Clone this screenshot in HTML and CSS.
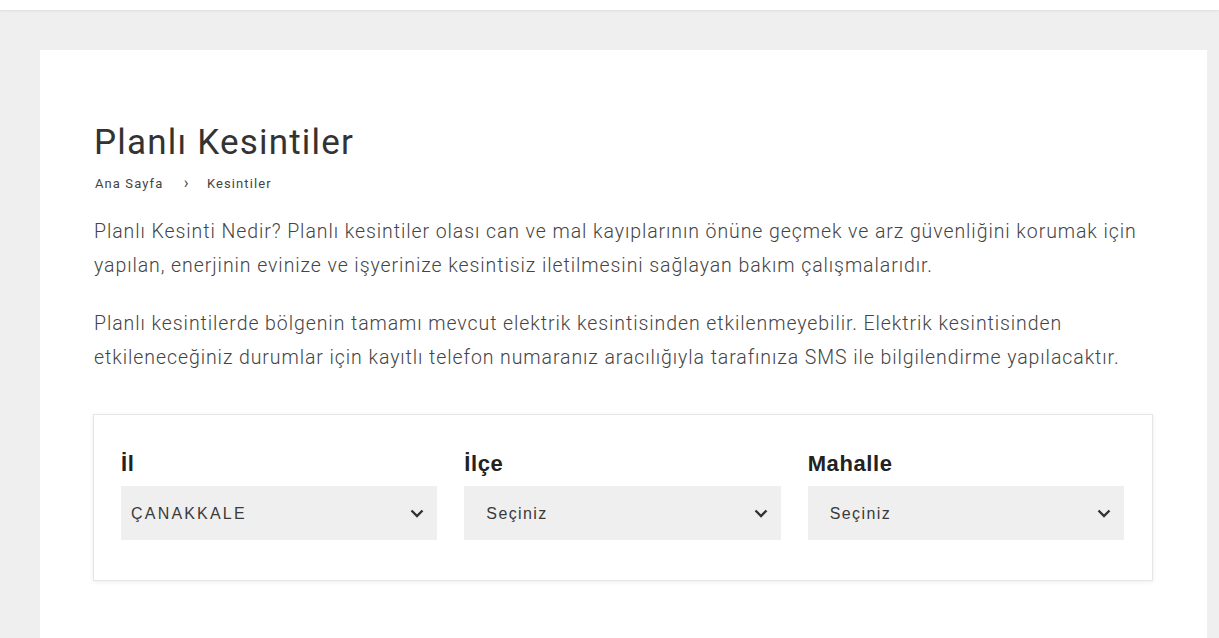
FILE: index.html
```html
<!DOCTYPE html>
<html lang="tr">
<head>
  <meta charset="UTF-8" />
  <title>Planlı Kesintiler</title>
  <link rel="stylesheet" href="styles.css">
</head>
<body>
  <div class="topbar"></div>

  <div class="page">
    <div class="content">
      <h1>Planlı Kesintiler</h1>
      <div class="breadcrumb">
        <a href="#">Ana Sayfa</a>
        <span class="sep">&rsaquo;</span>
        <span>Kesintiler</span>
      </div>

      <p>Planlı Kesinti Nedir? Planlı kesintiler olası can ve mal kayıplarının önüne geçmek ve arz güvenliğini korumak için yapılan, enerjinin evinize ve işyerinize kesintisiz iletilmesini sağlayan bakım çalışmalarıdır.</p>
      <p>Planlı kesintilerde bölgenin tamamı mevcut elektrik kesintisinden etkilenmeyebilir. Elektrik kesintisinden etkileneceğiniz durumlar için kayıtlı telefon numaranız aracılığıyla tarafınıza SMS ile bilgilendirme yapılacaktır.</p>

      <!-- Filter box -->
      <div class="filter">
        <div class="field">
          <label for="il">İl</label>
          <div class="select-wrap">
            <select id="il" class="selected">
              <option>ÇANAKKALE</option>
            </select>
            <svg class="chevron" viewBox="0 0 14 9"><path d="M1.5 1.5 L7 7 L12.5 1.5" /></svg>
          </div>
        </div>
        <div class="field">
          <label for="ilce">İlçe</label>
          <div class="select-wrap">
            <select id="ilce">
              <option>Seçiniz</option>
            </select>
            <svg class="chevron" viewBox="0 0 14 9"><path d="M1.5 1.5 L7 7 L12.5 1.5" /></svg>
          </div>
        </div>
        <div class="field">
          <label for="mahalle">Mahalle</label>
          <div class="select-wrap">
            <select id="mahalle">
              <option>Seçiniz</option>
            </select>
            <svg class="chevron" viewBox="0 0 14 9"><path d="M1.5 1.5 L7 7 L12.5 1.5" /></svg>
          </div>
        </div>
      </div>
    </div>
  </div>
</body>
</html>
```

FILE: styles.css
```css
body {
  margin: 0;
  font-family: Roboto, "Liberation Sans", sans-serif;
  background: #efefef;
  color: #333;
}

.topbar {
  height: 10px;
  background: #fff;
  box-shadow: 0 1px 3px rgba(0,0,0,0.08);
}

.page {
  padding: 40px 12px 0 40px;
}

.content {
  background: #fff;
  padding: 74px 54px 60px 53px;
  min-height: 520px;
}

h1 {
  margin: 0 0 0 1px;
  font-size: 35px;
  font-weight: 400;
  letter-spacing: 1.2px;
  color: #333;
  line-height: 38px;
}

.breadcrumb {
  margin: 11px 0 0 2px;
  font-size: 13px;
  letter-spacing: 1.1px;
  color: #444;
}

.breadcrumb a {
  color: #444;
  text-decoration: none;
}

.breadcrumb .sep {
  margin: 0 13px 0 16px;
  font-size: 16px;
}

p {
  margin: 23px 0 24px 1px;
  font-size: 19.5px;
  font-weight: 300;
  letter-spacing: 0.92px;
  line-height: 34px;
  color: #444;
}

.filter {
  margin-top: 39px;
  border: 1px solid #e6e6e6;
  box-shadow: 0 1px 4px rgba(0,0,0,0.08);
  padding: 36px 28px 40px 27px;
  display: grid;
  grid-template-columns: repeat(3, 1fr);
  gap: 27px;
}

.field label {
  display: block;
  font-family: "Liberation Sans", Arial, sans-serif;
  font-weight: bold;
  font-size: 22px;
  letter-spacing: 0.6px;
  line-height: 26px;
  color: #222;
  margin-bottom: 9px;
}

.select-wrap {
  position: relative;
}

select {
  appearance: none;
  width: 100%;
  height: 54px;
  border: none;
  background: #efefef;
  padding: 0 20px 0 22px;
  font-family: "Liberation Sans", Arial, sans-serif;
  font-size: 16px;
  letter-spacing: 1.4px;
  color: #3a3a3a;
  border-radius: 0;
}

select.selected {
  padding-left: 10px;
  letter-spacing: 2.2px;
}

.chevron {
  position: absolute;
  right: 13px;
  top: 23px;
  width: 14px;
  height: 9px;
  pointer-events: none;
}

.chevron path {
  fill: none;
  stroke: #333;
  stroke-width: 2.4;
}
```
